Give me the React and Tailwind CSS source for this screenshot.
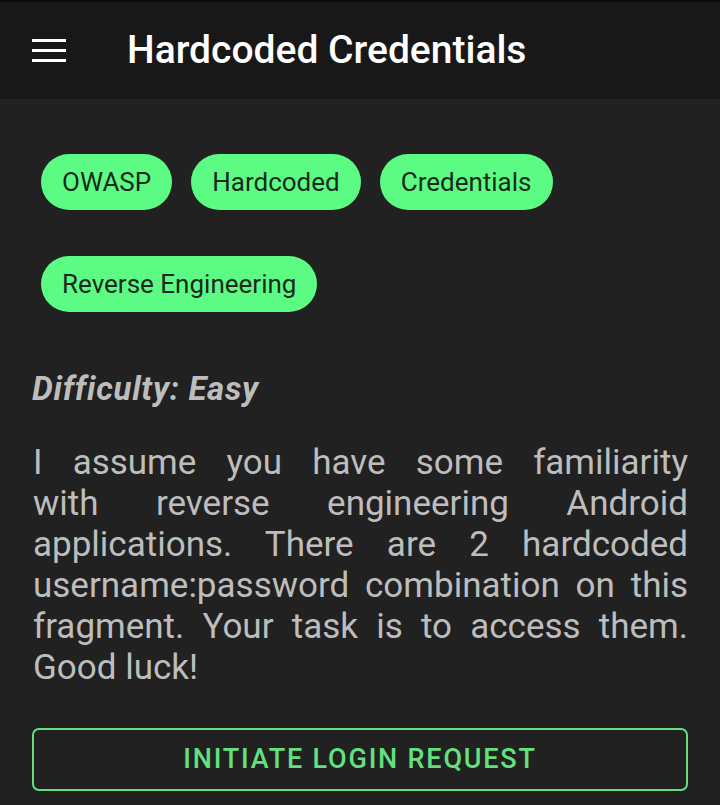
import React from "react";

const chips1 = ["OWASP", "Hardcoded", "Credentials"];

const lines = [
  "I assume you have some familiarity",
  "with reverse engineering Android",
  "applications. There are 2 hardcoded",
  "username:password combination on this",
  "fragment. Your task is to access them.",
];

function Chip({ children }) {
  return (
    <div className="h-[56px] px-[21px] rounded-full bg-[#5cfc84] flex items-center text-[26px] text-[#1b2a1e] leading-none whitespace-nowrap">
      {children}
    </div>
  );
}

export default function App() {
  return (
    <div
      className="w-[720px] h-[805px] bg-[#212121] overflow-hidden flex flex-col"
      style={{ fontFamily: "Roboto, 'Noto Sans', sans-serif" }}
    >
      <div className="h-[2px] bg-[#0a0a0a]" />
      <div className="h-[97px] bg-[#181818] flex items-center shrink-0">
        <div className="ml-[32px] w-[34px] flex flex-col gap-[7px]">
          <div className="h-[3px] bg-white" />
          <div className="h-[3px] bg-white" />
          <div className="h-[3px] bg-white" />
        </div>
        <div className="ml-[61px] text-white text-[39px] font-medium leading-none whitespace-nowrap">
          Hardcoded Credentials
        </div>
      </div>
      <div className="px-[32px] pt-[55px] flex flex-col">
        <div className="pl-[9px] flex flex-wrap gap-x-[19px] gap-y-[46px]">
          {chips1.map((c) => (
            <Chip key={c}>{c}</Chip>
          ))}
          <Chip>Reverse Engineering</Chip>
        </div>
        <div className="mt-[60px] text-[33px] italic font-bold text-[#bdbdbd] leading-none tracking-[0.7px] whitespace-nowrap">
          Difficulty: Easy
        </div>
        <div className="mt-[37px] pl-[1px] text-[35px] leading-[41px] text-[#bdbdbd]">
          {lines.map((l) => (
            <div key={l} className="text-justify [text-align-last:justify] whitespace-nowrap">
              {l}
            </div>
          ))}
          <div>Good luck!</div>
        </div>
        <button className="mt-[40px] h-[63px] w-full rounded-[7px] border-2 border-[#63e07f] text-[#63e07f] text-[27px] font-medium tracking-[1.8px] flex items-center justify-center leading-none">
          INITIATE LOGIN REQUEST
        </button>
      </div>
    </div>
  );
}
